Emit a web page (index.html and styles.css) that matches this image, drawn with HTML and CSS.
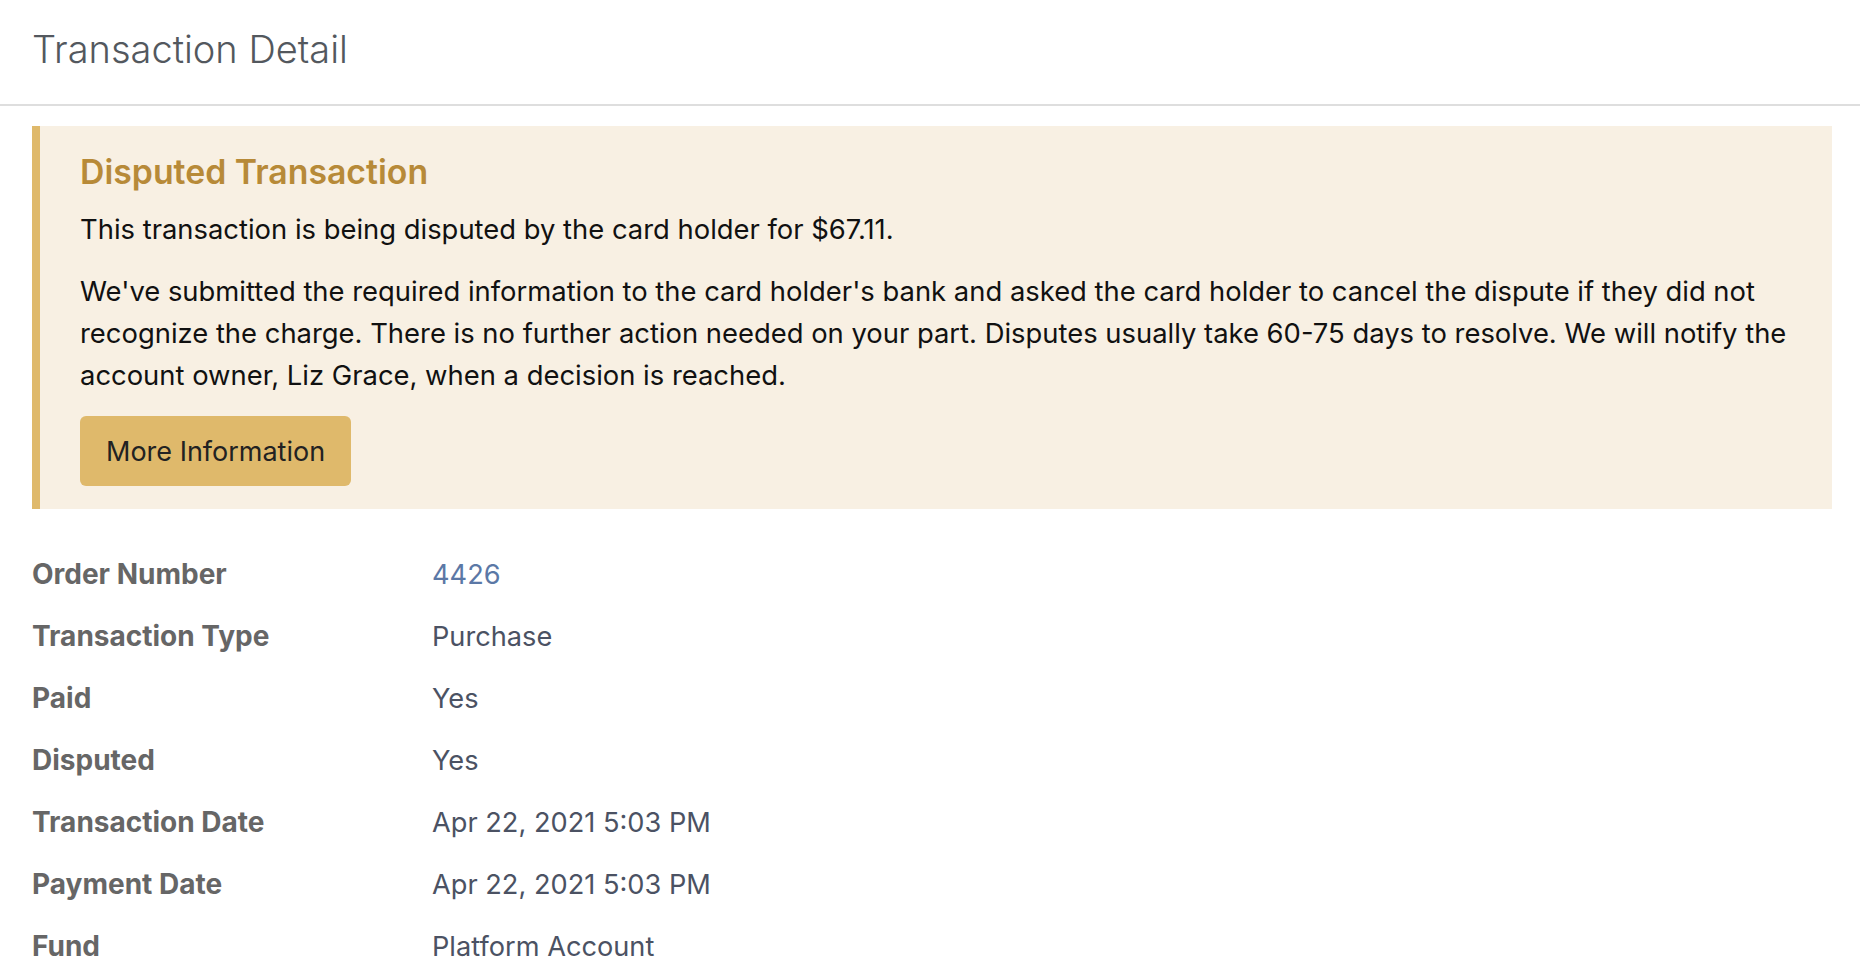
FILE: index.html
```html
<!DOCTYPE html>
<html lang="en">
<head>
<meta charset="utf-8">
<title>Transaction Detail</title>
<link rel="stylesheet" href="styles.css">
</head>
<body>
<header class="page-header">
  <h1 class="page-title">Transaction Detail</h1>
</header>
<main class="page-body">
  <section class="alert">
    <h2 class="alert-title">Disputed Transaction</h2>
    <p class="alert-text">This transaction is being disputed by the card holder for $67.11.</p>
    <p class="alert-text">We've submitted the required information to the card holder's bank and asked the card holder to cancel the dispute if they did not recognize the charge. There is no further action needed on your part. Disputes usually take 60-75 days to resolve. We will notify the account owner, Liz Grace, when a decision is reached.</p>
    <button class="btn" type="button">More Information</button>
  </section>
  <dl class="details">
    <div class="row"><dt>Order Number</dt><dd><a class="link" href="#">4426</a></dd></div>
    <div class="row"><dt>Transaction Type</dt><dd>Purchase</dd></div>
    <div class="row"><dt>Paid</dt><dd>Yes</dd></div>
    <div class="row"><dt>Disputed</dt><dd>Yes</dd></div>
    <div class="row"><dt>Transaction Date</dt><dd>Apr 22, 2021 5:03 PM</dd></div>
    <div class="row"><dt>Payment Date</dt><dd>Apr 22, 2021 5:03 PM</dd></div>
    <div class="row"><dt>Fund</dt><dd>Platform Account</dd></div>
  </dl>
</main>
</body>
</html>
```
FILE: styles.css
```css
* { box-sizing: border-box; }
html, body { margin: 0; padding: 0; background: #ffffff; }
body { font-family: Inter, "Noto Sans", sans-serif; color: #111; }

.page-header {
  padding: 26px 28px 32px 32px;
  border-bottom: 2px solid #dedede;
}
.page-title {
  margin: 0;
  font-size: 38px;
  line-height: 46px;
  font-weight: 300;
  color: #53585e;
}

.page-body { padding: 20px 28px 0 32px; }

.alert {
  background: #f8f0e3;
  border-left: 8px solid #dfb96b;
  padding: 25px 40px 23px 40px;
}
.alert-title {
  margin: 0 0 16px;
  font-size: 33.8px;
  line-height: 41px;
  font-weight: 600;
  color: #b78a38;
}
.alert-text {
  margin: 0 0 20px;
  font-size: 27.4px;
  line-height: 42px;
}
.btn {
  display: block;
  font-family: inherit;
  font-size: 27px;
  color: #222;
  background: #dfb96b;
  border: 0;
  border-radius: 6px;
  height: 70px;
  padding: 0 26px;
}

.details { margin: 34px 0 0; }
.row { display: grid; grid-template-columns: 400px 1fr; height: 62px; align-items: center; }
.row dt { font-weight: 700; font-size: 28px; color: #666; }
.row dd { margin: 0; font-size: 27.2px; color: #4b5263; }
.link { color: #5b78a6; text-decoration: none; }
```
